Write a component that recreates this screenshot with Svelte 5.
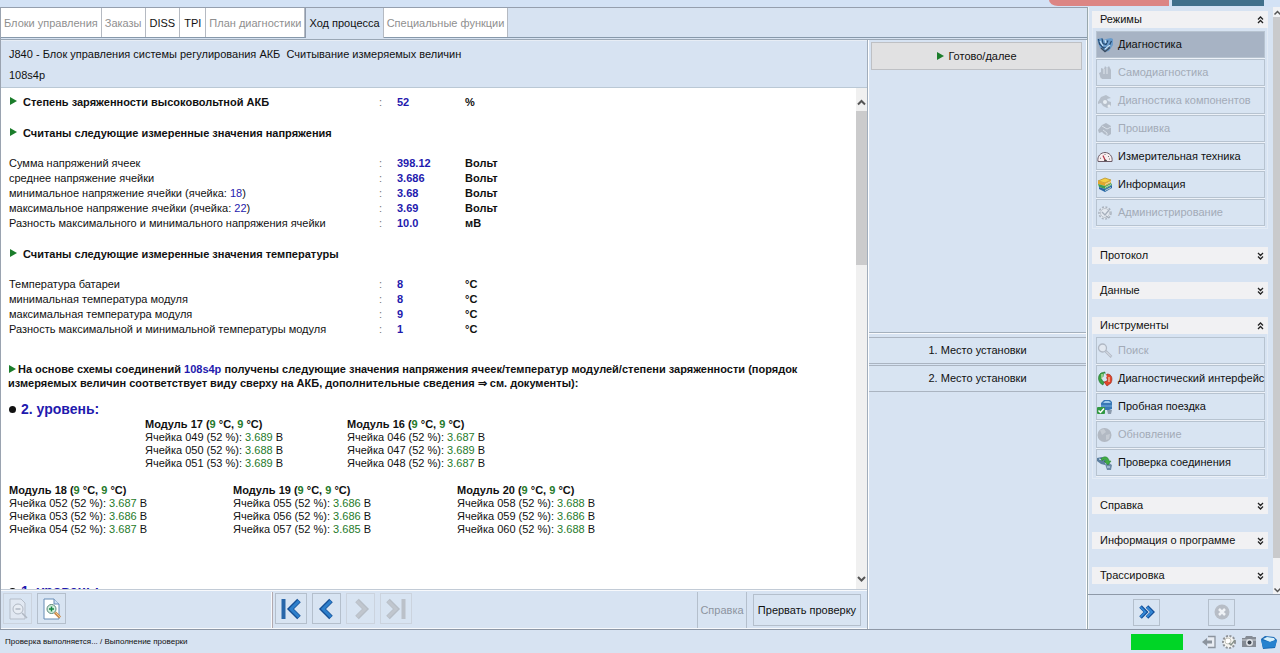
<script>
  const tabs = [
    { label: 'Блоки управления', off: true },
    { label: 'Заказы', off: true },
    { label: 'DISS' },
    { label: 'TPI' },
    { label: 'План диагностики', off: true },
    { label: 'Ход процесса', active: true },
    { label: 'Специальные функции', off: true }
  ];

  const charge = [{ label: 'Степень заряженности высоковольтной АКБ', value: '52', unit: '%' }];
  const voltage = [
    { label: 'Сумма напряжений ячеек', value: '398.12', unit: 'Вольт' },
    { label: 'среднее напряжение ячейки', value: '3.686', unit: 'Вольт' },
    { label: 'минимальное напряжение ячейки (ячейка: ', cell: '18', value: '3.68', unit: 'Вольт' },
    { label: 'максимальное напряжение ячейки (ячейка: ', cell: '22', value: '3.69', unit: 'Вольт' },
    { label: 'Разность максимального и минимального напряжения ячейки', value: '10.0', unit: 'мВ' }
  ];
  const temperature = [
    { label: 'Температура батареи', value: '8', unit: '°C' },
    { label: 'минимальная температура модуля', value: '8', unit: '°C' },
    { label: 'максимальная температура модуля', value: '9', unit: '°C' },
    { label: 'Разность максимальной и минимальной температуры модуля', value: '1', unit: '°C' }
  ];

  const upper = [
    { n: 17, cells: [['049', 52, '3.689'], ['050', 52, '3.688'], ['051', 53, '3.689']] },
    { n: 16, cells: [['046', 52, '3.687'], ['047', 52, '3.689'], ['048', 52, '3.687']] }
  ];
  const lower = [
    { n: 18, cells: [['052', 52, '3.687'], ['053', 52, '3.686'], ['054', 52, '3.687']] },
    { n: 19, cells: [['055', 52, '3.686'], ['056', 52, '3.686'], ['057', 52, '3.685']] },
    { n: 20, cells: [['058', 52, '3.688'], ['059', 52, '3.686'], ['060', 52, '3.688']] }
  ];

  const groups = [
    {
      title: 'Режимы',
      items: [
        { label: 'Диагностика', icon: 'steth', active: true },
        { label: 'Самодиагностика', icon: 'hand', off: true },
        { label: 'Диагностика компонентов', icon: 'parts', off: true },
        { label: 'Прошивка', icon: 'flash', off: true },
        { label: 'Измерительная техника', icon: 'gauge' },
        { label: 'Информация', icon: 'books' },
        { label: 'Администрирование', icon: 'gear', off: true }
      ]
    },
    { title: 'Протокол' },
    { title: 'Данные' },
    {
      title: 'Инструменты',
      items: [
        { label: 'Поиск', icon: 'search', off: true },
        { label: 'Диагностический интерфейс', icon: 'plug' },
        { label: 'Пробная поездка', icon: 'car' },
        { label: 'Обновление', icon: 'globe', off: true },
        { label: 'Проверка соединения', icon: 'link' }
      ]
    },
    { title: 'Справка' },
    { title: 'Информация о программе' },
    { title: 'Трассировка' }
  ];
</script>

{#snippet icon(name)}
  <svg class="icon" viewBox="0 0 16 16" aria-hidden="true">
    {#if name === 'steth'}
      <path d="M0 2l5-1 2 2 2-1 5-1 2 1v6l-4 6-4 1-5-4z" fill="#6b9ccb" />
      <path d="M1.500 2l1 5 4 4 5-1 3-6M5 1.500l1 5 3 1 2-4" fill="none" stroke="#23486f" stroke-width="1.200" />
      <path d="M3 4l3 5M8 3l1 3M8 12l5-4" stroke="#c9e4f8" stroke-width="1.200" />
      <path d="M4 11l4 3.500 5-4" fill="none" stroke="#3c4d61" stroke-width="1.400" />
    {:else if name === 'hand'}
      <path d="M2 8l2-1V3l3 1 1-3 2 2 2-2 2 4v9H4z" fill="#b4bdc9" />
      <path d="M1 8v6h4M7 4v5M10 3v6" fill="none" stroke="#dfe6ee" />
    {:else if name === 'parts'}
      <path d="M1 9l3-5 5-2 5 3-4 1 1 2 3 1v4l-4 2-4-2-2-3-3 1z" fill="#b7c0cb" />
      <circle cx="8" cy="9" r="2" fill="#e8eef4" />
      <circle cx="12" cy="13" r="1.500" fill="#e8eef4" />
    {:else if name === 'flash'}
      <path d="M1 9l4-5 4-2 5 3v8l-3 2-4-2-2-2-3 1z" fill="#b1bac6" />
      <path d="M5 5l5 3 4-2M6 9l4 3v2" fill="none" stroke="#d8e0e9" />
    {:else if name === 'gauge'}
      <path d="M1 12.500C0 7 4 3.500 8 3.500s8 3.500 7 9z" fill="#f8eef0" stroke="#6b5c68" />
      <path d="M8.500 12L6 6.500" stroke="#b03040" stroke-width="1.200" />
      <path d="M3 9l1 .5M8 5v1M12 7l-1 1M13 10h-1" stroke="#777" />
      <path d="M7 12a1.500 1.500 0 0 1 3 0z" fill="#444" />
    {:else if name === 'books'}
      <path d="M1 4l7-3 6 2-6 3z" fill="#f4cf45" stroke="#a87c12" stroke-width=".6" />
      <path d="M1 4l7 2 6-3v3L8 9 1 7z" fill="#e3a62c" />
      <path d="M1 7l7 2 6-3 1 2-7 4-6-2z" fill="#3f9e52" />
      <path d="M2 10l6 2 7-4v3l-7 4-6-3z" fill="#2767a6" />
      <path d="M8 7.500l6-3M8 10.500l6-3M8 13.500l6-3" stroke="#eef3d5" stroke-width=".8" />
    {:else if name === 'gear'}
      <circle cx="8" cy="8" r="6" fill="#e4e9f0" stroke="#a9b2be" stroke-width="1.500" stroke-dasharray="2 1.500" />
      <circle cx="8" cy="8" r="4.500" fill="none" stroke="#bcc4ce" />
      <path d="M5 7l3 3 4-5M9 11l3 2" fill="none" stroke="#a6afbb" stroke-width="1.300" />
    {:else if name === 'search'}
      <circle cx="5.500" cy="5" r="4" fill="#e2e8f0" stroke="#b0b8c4" stroke-width="1.300" />
      <path d="M8.500 8l6 6" stroke="#b0b8c4" stroke-width="2.500" />
      <path d="M9 8.500l5 5" stroke="#e6ebf2" />
    {:else if name === 'plug'}
      <path d="M6 14C1 12 0 5 4 2l4-1v4L5 6c-1 2 0 4 2 5z" fill="#3da443" stroke="#1c6b2b" stroke-width=".6" />
      <path d="M10 3c5 0 6 5 4 9l-4 3-3-4 3-1c1-2 0-3-2-4z" fill="#e2452b" stroke="#962314" stroke-width=".6" />
      <path d="M5 3v5M12 6v5" stroke="#f2f0c8" />
      <path d="M7 2l3 3-2 4-2-1z" fill="#d7e3f2" />
    {:else if name === 'car'}
      <path d="M4 4l3-3h6l2 2v7l-3 1H4z" fill="#3978b7" />
      <path d="M6 4l2-2h4l2 2z" fill="#9cc9ec" />
      <path d="M4 7h11" stroke="#76aee0" />
      <path d="M10 11h5l-1 4h-3z" fill="#8b9bad" />
      <rect x="0" y="8" width="8" height="7" rx="1" fill="#329943" />
      <path d="M1.500 11.500l2 2L7 9.500" fill="none" stroke="#fff" stroke-width="1.500" />
    {:else if name === 'globe'}
      <circle cx="7.500" cy="8" r="7" fill="#b2b9c3" />
      <path d="M3 3l4-1 2 3-4 3zM9 8l4-1-1 5-3 1z" fill="#c5cbd3" />
    {:else if name === 'link'}
      <path d="M0 3l5-1 4 4-1 4-4-1-4-3z" fill="#5c7f9f" />
      <path d="M8 9l4-1 3 2-1 5-4 0z" fill="#6d8ba7" />
      <path d="M2 4l3 1M10 12h3" stroke="#d2e8f7" />
      <path d="M4 4C7 0 12 2 12 6h2l-3 4-4-4h2C8 4 6 4 5 6z" fill="#41ac45" stroke="#207d2e" stroke-width=".5" />
    {/if}
  </svg>
{/snippet}

{#snippet chevrons(open)}
  <svg class="chev" viewBox="0 0 7 8" aria-hidden="true">
    {#if open}
      <path d="M1 3.500L3.500 1 6 3.500M1 7L3.500 4.500 6 7" />
    {:else}
      <path d="M1 1L3.500 3.500 6 1M1 4.500L3.500 7 6 4.500" />
    {/if}
  </svg>
{/snippet}

{#snippet marker()}
  <svg class="marker" viewBox="0 0 8 8" aria-hidden="true"><path d="M1 0l7 4-7 4z" fill="#1b7d2b" /></svg>
{/snippet}

{#snippet measures(rows, lead)}
  <table class="measures">
    <tbody>
      {#each rows as r}
        <tr>
          <td class="name" class:lead>
            {#if lead}{@render marker()}{/if}{r.label}{#if r.cell}<span class="blue">{r.cell}</span>){/if}
          </td>
          <td class="colon">:</td>
          <td class="value">{r.value}</td>
          <td class="unit">{r.unit}</td>
        </tr>
      {/each}
    </tbody>
  </table>
{/snippet}

{#snippet modules(list)}
  {#each list as m}
    <div class="module">
      <h4>Модуль {m.n} (<span class="green">9</span> °C, <span class="green">9</span> °C)</h4>
      {#each m.cells as c}
        <p>Ячейка {c[0]} ({c[1]} %): <span class="green">{c[2]}</span> В</p>
      {/each}
    </div>
  {/each}
{/snippet}

{#snippet arrow(dir, bar, off)}
  <svg class="arrow" class:flip={dir === 'next'} viewBox="0 0 22 22" aria-hidden="true">
    <path d={bar ? 'M19 2.500L10.500 11 19 19.500' : 'M15 2.500L6.500 11 15 19.500'} fill="none" stroke={off ? '#b6bdc6' : '#154f95'} stroke-width="5" />
    <path d={bar ? 'M19 3L11 11 19 19' : 'M15 3L7 11 15 19'} fill="none" stroke={off ? '#c0c6ce' : '#2d7fcb'} stroke-width="3" />
    {#if bar}<path d="M3.500 1v20" stroke={off ? '#bbc1c9' : '#2866a9'} stroke-width="4" />{/if}
  </svg>
{/snippet}

<div class="app">
  <div class="top"><span class="red"></span><span class="teal"></span></div>
  <div class="work">
    <main>
      <nav class="tabs">
        {#each tabs as t}
          <button class:active={t.active} disabled={t.off}>{t.label}</button>
        {/each}
      </nav>
      <div class="panels">
        <section class="process">
          <header>
            <p>J840 - Блок управления системы регулирования АКБ&nbsp; Считывание измеряемых величин</p>
            <p>108s4p</p>
          </header>
          <div class="view">
            <article>
              {@render measures(charge, true)}
              <h3>{@render marker()}Считаны следующие измеренные значения напряжения</h3>
              {@render measures(voltage, false)}
              <h3>{@render marker()}Считаны следующие измеренные значения температуры</h3>
              {@render measures(temperature, false)}
              <p class="note">
                {@render marker()}На основе схемы соединений <span class="blue">108s4p</span> получены следующие значения напряжения ячеек/температур модулей/степени заряженности (порядок измеряемых величин соответствует виду сверху на АКБ, дополнительные сведения ⇒ см. документы):
              </p>
              <h2><i></i>2. уровень:</h2>
              <div class="modules upper">{@render modules(upper)}</div>
              <div class="modules lower">{@render modules(lower)}</div>
              <h2 class="next"><i></i>1. уровень:</h2>
            </article>
            <div class="scroll">
              <svg viewBox="0 0 11 11" aria-hidden="true"><path d="M2 7.500L5.500 4 9 7.500" /></svg>
              <span class="thumb"></span>
              <svg viewBox="0 0 11 11" aria-hidden="true"><path d="M2 4L5.500 7.500 9 4" /></svg>
            </div>
          </div>
          <footer>
            <div class="zooms">
              <button disabled aria-label="Уменьшить">
                <svg width="20" height="22" viewBox="0 0 20 22"><path d="M2 1h11l4 4v16H2z" fill="#e1e8f2" stroke="#b5bdc8" /><circle cx="10" cy="11" r="5" fill="#e8edf4" stroke="#b0b8c3" /><path d="M7.500 11h5M14 15l5 5" stroke="#b0b8c3" stroke-width="1.500" /></svg>
              </button>
              <button aria-label="Увеличить">
                <svg width="20" height="22" viewBox="0 0 20 22"><path d="M2 1h10l5 5v15H2z" fill="#fff" stroke="#668cb6" /><path d="M12 1v5h5" fill="#cfe0f2" stroke="#668cb6" /><circle cx="9.500" cy="11" r="4.500" fill="#d3efdf" stroke="#5a8579" /><path d="M7 11h5M9.500 8.500v5" stroke="#168643" stroke-width="1.500" /><path d="M13 14.500l5 5" stroke="#c98a4e" stroke-width="3" /><path d="M13.500 14.500l4.500 4.500" stroke="#f4c889" /></svg>
              </button>
            </div>
            <div class="steps">
              <button aria-label="В начало">{@render arrow('prev', true, false)}</button>
              <button aria-label="Назад">{@render arrow('prev', false, false)}</button>
              <button disabled aria-label="Вперёд">{@render arrow('next', false, true)}</button>
              <button disabled aria-label="В конец">{@render arrow('next', true, true)}</button>
            </div>
            <button class="help" disabled>Справка</button>
            <button class="abort">Прервать проверку</button>
          </footer>
        </section>
        <section class="actions">
          <div class="ready">
            <button>{@render marker()}Готово/далее</button>
          </div>
          <div class="places">
            <button>1. Место установки</button>
            <button>2. Место установки</button>
          </div>
        </section>
      </div>
    </main>
    <aside>
      <div class="side">
        <div class="groups">
          {#each groups as g}
            <section class="group">
              <button class="head">{g.title}{@render chevrons(g.items)}</button>
              {#if g.items}
                <ul class="items">
                  {#each g.items as it}
                    <li><button class:active={it.active} disabled={it.off}>{@render icon(it.icon)}{it.label}</button></li>
                  {/each}
                </ul>
              {/if}
            </section>
          {/each}
        </div>
        <div class="sidescroll">
          <svg viewBox="0 0 8 8" aria-hidden="true"><path d="M1.500 5.500L4.500 2.500 7.500 5.500" /></svg>
          <span></span>
          <svg viewBox="0 0 8 8" aria-hidden="true"><path d="M1.500 2.500L4.500 5.500 7.500 2.500" /></svg>
        </div>
      </div>
      <div class="sidefoot">
        <button aria-label="Далее">
          <svg width="16" height="14" viewBox="0 0 16 14"><path d="M1.500 1.500L7 7l-5.500 5.500M8 1.500L13.500 7 8 12.500" fill="none" stroke="#134f99" stroke-width="3.600" /><path d="M1.500 2L6.500 7l-5 5M8 2l5 5-5 5" fill="none" stroke="#3489d6" stroke-width="1.800" /></svg>
        </button>
        <button disabled aria-label="Отмена">
          <svg width="16" height="16" viewBox="0 0 16 16"><circle cx="8" cy="8" r="7.500" fill="#b7bdc6" /><path d="M5 5l6 6M11 5l-6 6" stroke="#eff2f6" stroke-width="2.500" /></svg>
        </button>
      </div>
    </aside>
  </div>
  <div class="status">
    <span>Проверка выполняется... / Выполнение проверки</span>
    <div class="tray">
      <span class="progress"></span>
      <svg width="16" height="16" viewBox="0 0 16 16"><path d="M7 2.500h7v11H7" fill="#e9edf3" stroke="#8c949e" stroke-width="1.300" /><path d="M1 8l5-4v2.500h5v3H6V12z" fill="#8b939d" /></svg>
      <svg width="16" height="16" viewBox="0 0 16 16"><circle cx="8" cy="8" r="6" fill="#f5f5f2" stroke="#8f9398" stroke-width="2" stroke-dasharray="2 1.500" /><circle cx="7" cy="7" r="3" fill="#fff" stroke="#c5c5bd" /><path d="M8 9l2 2 4-5" fill="none" stroke="#88938c" stroke-width="1.500" /></svg>
      <svg width="16" height="16" viewBox="0 0 16 16"><path d="M1 4h3l1-2h6l1 1h3v10H1z" fill="#858b94" /><path d="M1 6h14" stroke="#cbd0d6" /><circle cx="8.500" cy="8.500" r="3.500" fill="#e0e4e9" /><circle cx="8.500" cy="8.500" r="2" fill="#414852" /></svg>
      <svg width="16" height="16" viewBox="0 0 16 16"><path d="M0 5l4-3 9 1 3 3-2 8-12 1z" fill="#1969b4" /><path d="M2 5l4-2 7 1 1 2-5 2z" fill="#d7f0fb" /><path d="M0 6l9 2 7-2-2 7-12 1z" fill="#2682cf" /></svg>
    </div>
  </div>
</div>

<style>
  :global(body) { margin: 0; }
  p, h2, h3, h4, ul { margin: 0; padding: 0; list-style: none; }
  .app {
    display: flex; flex-direction: column; height: 100vh; overflow: hidden;
    background: #d7e3f2; color: #111; font: 11px/15px "Liberation Sans", Arial, sans-serif;
  }
  button {
    font: inherit; color: #111; margin: 0; padding: 0; border: 1px solid #b4bfcc;
    background: #d8e4f2; display: flex; align-items: center; justify-content: center;
  }
  button:disabled { color: #a3abb7; }
  .top { display: flex; justify-content: flex-end; gap: 3px; height: 7px; padding-right: 16px; flex: none; background: #d3e2f5; }
  .red { width: 120px; height: 6px; background: #dc8584; border-bottom-left-radius: 12px 8px; }
  .teal { width: 92px; height: 6px; background: #41708b; }
  .work { flex: 1; min-height: 0; display: flex; }
  main { flex: 1; min-width: 0; display: flex; flex-direction: column; border-top: 1px solid #959fae; border-left: 1px solid #9aa3b0; }
  .tabs { display: flex; height: 29px; flex: none; border-bottom: 1px solid #8799ab; }
  .tabs button { background: #fff; border: 0; border-right: 1px solid #b5bac2; padding: 2px 4px 0; }
  .tabs button:disabled { color: #8f8f8f; padding: 2px 3px 0; }
  .tabs button.active { background: #d7e3f2; border-left: 1px solid #8f9bad; margin-bottom: -1px; padding: 2px 3px 1px; }
  .panels { flex: 1; min-height: 0; display: flex; margin-top: 1px; border-top: 1px solid #9aa7b5; }
  .process { flex: 1; min-width: 0; display: flex; flex-direction: column; border-right: 1px solid #a1adbb; }
  .process header { height: 48px; flex: none; box-sizing: border-box; padding: 6px 8px; display: flex; flex-direction: column; gap: 6px; border-bottom: 1px solid #bac8d5; border-top: 1px solid #e7edf5; }
  .view { flex: 1; min-height: 0; display: flex; background: #fff; }
  article { flex: 1; min-width: 0; overflow: hidden; padding: 7px 52px 0 8px; }
  .measures { border-collapse: collapse; table-layout: fixed; width: 520px; }
  .measures td { padding: 0; height: 15px; white-space: nowrap; }
  .name { width: 370px; }
  .name.lead { font-weight: bold; }
  .colon { width: 18px; color: #777; }
  .value { width: 68px; color: #1f1aae; font-weight: bold; }
  .unit { font-weight: bold; }
  .marker { width: 8px; height: 8px; margin-right: 6px; flex: none; }
  .lead .marker, h3 .marker { vertical-align: 1px; }
  h3 { font-size: 11px; line-height: 15px; padding: 16px 0 15px; }
  .blue { color: #1f1aae; }
  .green { color: #257a2b; }
  .note { font-weight: bold; line-height: 14px; padding-top: 25px; margin-left: -1px; }
  .note .marker { margin-right: 2px; }
  h2 { display: flex; align-items: center; gap: 5px; font-size: 14px; line-height: 18px; padding-top: 10px; color: #1f1aae; }
  h2 i { width: 7px; height: 7px; border-radius: 50%; background: #111; }
  h2.next { padding-top: 46px; }
  .modules { display: flex; line-height: 13px; }
  .module { flex: none; white-space: nowrap; }
  .module h4 { font-size: 11px; }
  .upper { padding-left: 136px; }
  .upper .module { width: 202px; }
  .lower { padding-top: 14px; }
  .lower .module { width: 224px; }
  .scroll { width: 11px; flex: none; display: flex; flex-direction: column; background: #f0f0f0; padding: 9px 0 5px; }
  .scroll svg { width: 11px; height: 11px; flex: none; fill: none; stroke: #555; stroke-width: 2; }
  .scroll .thumb { height: 154px; margin: 3px 0 auto; background: #cbcbcc; }
  footer { flex: none; display: flex; height: 36px; padding-top: 2px; background: #d7e3f2; border-top: 1px solid #c2cbd6; box-shadow: inset 0 1px #f7f9fc; border-bottom: 1px solid #f7f9fc; }
  .zooms { flex: 1; display: flex; gap: 5px; padding: 1px 2px; max-width: 266px; border-right: 1px solid #f7f9fc; }
  .zooms button { width: 29px; height: 31px; }
  .zooms button:disabled, .steps button:disabled { border-color: #cbd3de; }
  .steps { display: flex; gap: 5px; padding: 1px 2px; border-left: 1px solid #b2a9ae; }
  .steps button { width: 29px; height: 31px; }
  .steps button:first-child, .steps button:last-child { width: 32px; }
  .arrow { width: 22px; height: 22px; flex: none; }
  .arrow.flip { transform: scaleX(-1); }
  .help { margin-left: auto; border-width: 0 1px; width: 50px; }
  .abort { width: 108px; margin: 2px 6px 2px; }
  .process footer .help:disabled { color: #8d949f; }
  .actions { width: 219px; flex: none; box-sizing: border-box; display: flex; flex-direction: column; border-left: 1px solid #fff; border-right: 1px solid #fff; }
  .ready { height: 293px; padding: 2px 4px 0 2px; box-sizing: border-box; border-bottom: 1px solid #a4b0bd; }
  .ready button { width: 100%; height: 28px; background: #e1e1e2; border-color: #bec0c4; }
  .ready .marker { margin-right: 4px; }
  .places { display: flex; flex-direction: column; gap: 1px; padding-top: 3px; border-top: 1px solid #f7f9fc; }
  .places button { height: 27px; border-width: 1px 0; border-color: #aab4c1; width: 100%; }
  aside { width: 192px; flex: none; display: flex; flex-direction: column; border-left: 1px solid #98a7ac; box-shadow: inset 1px 0 #f0f4f8; }
  .side { flex: 1; min-height: 0; display: flex; justify-content: space-between; overflow: hidden; border-bottom: 1px solid #8e99a8; }
  .groups { width: 176px; padding: 4px 0 0 4px; display: flex; flex-direction: column; gap: 18px; }
  .head { width: 100%; height: 17px; border: 0; background: #f1f1f3; justify-content: space-between; padding: 0 4px 0 8px; }
  .chev { width: 7px; height: 8px; fill: none; stroke: #222; stroke-width: 1.3; }
  .items { display: flex; flex-direction: column; gap: 1px; padding: 3px 2px 2px 3px; border: 1px solid #e3ebf5; border-top: 0; }
  .group li button { width: 100%; height: 27px; justify-content: flex-start; gap: 5px; white-space: nowrap; border-color: #b7c3d0; box-shadow: 0 1px #ecf1f8; }
  .group li button.active { background: #a7b3c4; }
  .icon { width: 16px; height: 16px; flex: none; }
  .sidescroll { width: 7px; display: flex; flex-direction: column; background: #f1f2f4; padding-top: 2px; }
  .sidescroll svg { width: 8px; height: 8px; flex: none; fill: none; stroke: #555; stroke-width: 1.5; }
  .sidescroll span { flex: 1; background: #c9cacc; margin-bottom: 28px; }
  .sidefoot { height: 34px; flex: none; display: flex; align-items: center; justify-content: center; gap: 48px; }
  .sidefoot button { width: 27px; height: 27px; }
  .status { height: 23px; flex: none; display: flex; align-items: center; justify-content: space-between; border-top: 1px solid #8d97a6; padding: 0 3px 0 5px; font-size: 8px; }
  .tray { display: flex; align-items: center; gap: 4px; }
  .progress { width: 52px; height: 16px; background: #00d526; margin-right: 14px; }
</style>
